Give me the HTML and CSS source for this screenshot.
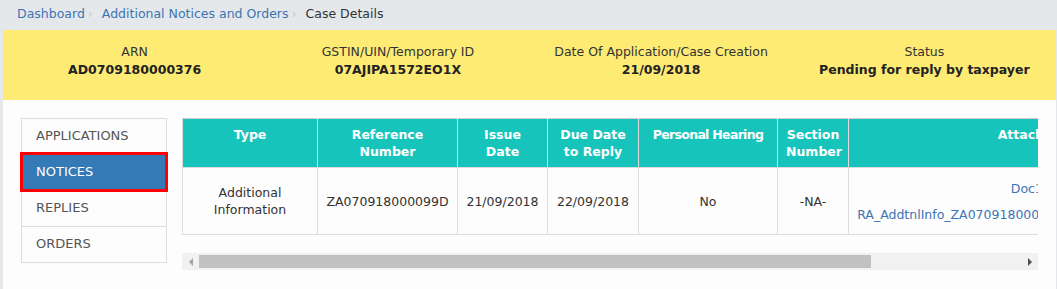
FILE: index.html
```html
<!DOCTYPE html>
<html lang="en">
<head>
<meta charset="utf-8">
<title>Case Details</title>
<link rel="stylesheet" href="styles.css">
</head>
<body>
<nav class="breadcrumb">
  <a class="crumb" href="#">Dashboard</a><span class="sep">›</span><a class="crumb" href="#">Additional Notices and Orders</a><span class="sep">›</span><span class="current">Case Details</span>
</nav>
<main class="main">
  <section class="case-header">
    <div class="case-field"><div class="label">ARN</div><div class="value">AD0709180000376</div></div>
    <div class="case-field"><div class="label">GSTIN/UIN/Temporary ID</div><div class="value">07AJIPA1572EO1X</div></div>
    <div class="case-field"><div class="label">Date Of Application/Case Creation</div><div class="value">21/09/2018</div></div>
    <div class="case-field"><div class="label">Status</div><div class="value">Pending for reply by taxpayer</div></div>
  </section>
  <section class="content">
    <ul class="side-nav">
      <li class="side-item">APPLICATIONS</li>
      <li class="side-item active">NOTICES</li>
      <li class="side-item">REPLIES</li>
      <li class="side-item">ORDERS</li>
    </ul>
    <div class="table-area">
      <div class="table-wrap">
        <table class="notices">
          <colgroup>
            <col class="c-type"><col class="c-ref"><col class="c-issue"><col class="c-due"><col class="c-ph"><col class="c-sec"><col class="c-att">
          </colgroup>
          <thead>
            <tr>
              <th>Type</th>
              <th>Reference Number</th>
              <th>Issue Date</th>
              <th>Due Date to Reply</th>
              <th class="tight">Personal Hearing</th>
              <th>Section Number</th>
              <th>Attachment</th>
            </tr>
          </thead>
          <tbody>
            <tr>
              <td>Additional Information</td>
              <td>ZA070918000099D</td>
              <td>21/09/2018</td>
              <td>22/09/2018</td>
              <td>No</td>
              <td>-NA-</td>
              <td class="att">
                <div class="doc-name">Doc1.pdf</div>
                <a class="doc-link" href="#">RA_AddtnlInfo_ZA070918000099D_21092018_120145.pdf</a>
              </td>
            </tr>
          </tbody>
        </table>
      </div>
      <div class="hscroll">
        <span class="arrow left"></span>
        <div class="track"><div class="thumb"></div></div>
        <span class="arrow right"></span>
      </div>
    </div>
  </section>
</main>
</body>
</html>
```
FILE: styles.css
```css
* { box-sizing: border-box; }
html, body { margin: 0; padding: 0; }
body {
  background: #e4e8eb;
  font-family: "DejaVu Sans", Verdana, sans-serif;
  font-size: 12.5px;
  color: #333;
  width: 1057px;
  height: 289px;
  overflow: hidden;
}
.breadcrumb {
  height: 30px;
  padding: 5px 0 0 17px;
  line-height: 17px;
  white-space: nowrap;
}
.crumb { color: #3d74b2; text-decoration: none; }
.sep { color: #c8c8c8; margin: 0 9px 0 3px; }
.current { color: #333; }

.main {
  margin: 0 1px 0 3px;
  background: #fcfdfc;
  height: 259px;
}
.case-header {
  background: #fdeb73;
  height: 70px;
  display: grid;
  grid-template-columns: repeat(4, 1fr);
  padding-top: 13px;
  text-align: center;
  line-height: 18px;
}
.label { color: #333; }
.value { font-weight: bold; color: #222; }

.content {
  display: flex;
  gap: 15px;
  padding: 18px 18px 0 18px;
}
.side-nav {
  list-style: none;
  margin: 0;
  padding: 0;
  width: 146px;
  border: 1px solid #dddddd;
  align-self: flex-start;
  font-size: 13px;
}
.side-item {
  height: 36px;
  line-height: 34px;
  padding-left: 14px;
  color: #555;
  border-top: 1px solid #dddddd;
}
.side-item:first-child { border-top: 0; height: 35px; }
.side-item.active {
  background: #337ab7;
  color: #fff;
  outline: 3px solid #ff0000;
  outline-offset: -1px;
  position: relative;
}
.table-area { width: 856px; }
.table-wrap {
  width: 856px;
  overflow: hidden;
}
.notices {
  table-layout: fixed;
  width: 1047px;
  border-collapse: collapse;
  margin-bottom: 18px;
}
.c-type { width: 135px; }
.c-ref { width: 140px; }
.c-issue { width: 90px; }
.c-due { width: 91px; }
.c-ph { width: 139px; }
.c-sec { width: 71px; }
.c-att { width: 381px; }
.notices th {
  background: #17c4bb;
  color: #fff;
  font-weight: bold;
  text-align: center;
  vertical-align: top;
  padding: 7px 8px 7px;
  line-height: 17px;
  height: 49px;
  border-left: 1px solid #dddddd;
  border-right: 1px solid #dddddd;
  border-top: 1px solid #cccccc;
}
.notices th.tight {
  white-space: nowrap;
  letter-spacing: -0.7px;
  padding: 7px 1px;
}
.notices td {
  text-align: center;
  vertical-align: middle;
  padding: 8px 6px;
  line-height: 17px;
  height: 67px;
  border: 1px solid #dddddd;
  color: #333;
}
.att { text-align: center; white-space: nowrap; }
.doc-name { color: #3d74b2; margin-bottom: 9px; }
.doc-link { color: #3d74b2; text-decoration: none; }

.hscroll {
  display: flex;
  align-items: center;
  height: 17px;
  background: #f1f1f1;
}
.arrow {
  width: 17px;
  height: 17px;
  display: flex;
  align-items: center;
  justify-content: center;
  flex: none;
}
.arrow::before {
  content: "";
  width: 0;
  height: 0;
  border-top: 4px solid transparent;
  border-bottom: 4px solid transparent;
}
.arrow.left::before { border-right: 4px solid #a3a3a3; }
.arrow.right::before { border-left: 4px solid #505050; }
.track {
  flex: 1;
  height: 17px;
  display: flex;
  align-items: center;
}
.thumb {
  width: 672px;
  height: 13px;
  background: #c1c1c1;
}
```
